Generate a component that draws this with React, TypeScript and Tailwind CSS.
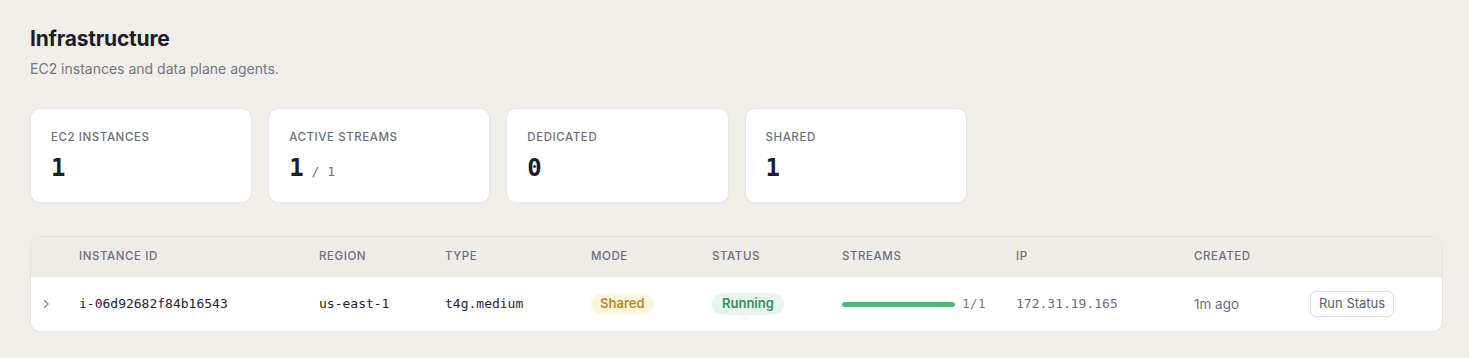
import React from "react";

const sans = { fontFamily: '"Inter", "Noto Sans", sans-serif' };
const mono = { fontFamily: '"DejaVu Sans Mono", "Liberation Mono", monospace' };

function Card({ label, value, sub }: { label: string; value: string; sub?: string }) {
  return (
    <div className="bg-white rounded-[10px] border border-[#e9e6e1] h-[95px] px-5 pt-[20px] shadow-[0_1px_2px_rgba(0,0,0,0.03)]">
      <div className="text-[11.5px] tracking-[0.05em] text-[#6b6f7b] font-medium leading-[16px]">{label}</div>
      <div className="mt-[9px] flex items-baseline gap-2" style={mono}>
        <span className="text-[24px] font-bold text-[#1b1d2b] leading-[28px]">{value}</span>
        {sub && <span className="text-[13px] text-[#6b6f7b]">/ {sub}</span>}
      </div>
    </div>
  );
}

export default function App() {
  const cols = "grid grid-cols-[48px_240px_126px_146px_121px_130px_174px_178px_116px_1fr] items-center";
  return (
    <div className="w-[1469px] h-[358px] bg-[#f1eee9] pl-[30px] pr-[26px] pt-[25px]" style={sans}>
      <h1 className="text-[21px] font-bold text-[#1b1d2b] leading-[28px] tracking-[-0.01em]">Infrastructure</h1>
      <p className="text-[14px] text-[#727683] mt-[6px] leading-[20px]">EC2 instances and data plane agents.</p>

      <div className="grid grid-cols-6 gap-4 mt-[29px]">
        <Card label="EC2 INSTANCES" value="1" />
        <Card label="ACTIVE STREAMS" value="1" sub="1" />
        <Card label="DEDICATED" value="0" />
        <Card label="SHARED" value="1" />
      </div>

      <div className="mt-[33px] rounded-[10px] border border-[#e6e3de] overflow-hidden bg-white">
        <div className={`${cols} h-[40px] bg-[#efece7] text-[11.5px] tracking-[0.05em] text-[#6b6f7b] font-medium border-b border-[#e6e3de]`}>
          <div />
          <div>INSTANCE ID</div>
          <div>REGION</div>
          <div>TYPE</div>
          <div>MODE</div>
          <div>STATUS</div>
          <div>STREAMS</div>
          <div>IP</div>
          <div>CREATED</div>
          <div />
        </div>
        <div className={`${cols} h-[54px] text-[13px] text-[#1f2330]`}>
          <div className="flex pl-[10px]">
            <svg width="10" height="10" viewBox="0 0 10 10" fill="none" stroke="#8a8d97" strokeWidth="1.3" strokeLinecap="round" strokeLinejoin="round">
              <path d="M3.5 1.5 L7 5 L3.5 8.5" />
            </svg>
          </div>
          <div style={mono}>i-06d92682f84b16543</div>
          <div style={mono}>us-east-1</div>
          <div style={mono}>t4g.medium</div>
          <div>
            <span className="inline-flex items-center h-[22px] px-[9px] rounded-full bg-[#fcf6e1] text-[#b98a2c] text-[13px] font-semibold">Shared</span>
          </div>
          <div>
            <span className="inline-flex items-center h-[22px] px-[10px] rounded-full bg-[#e6f6ef] text-[#3b8a5c] text-[13px] font-semibold">Running</span>
          </div>
          <div className="flex items-center gap-[7px]">
            <div className="w-[113px] h-[5px] rounded-full bg-[#4cb87a]" />
            <span className="text-[#7a7e8a]" style={mono}>1/1</span>
          </div>
          <div className="text-[#6b6f7b]" style={mono}>172.31.19.165</div>
          <div className="text-[#6b6f7b] text-[13.5px]">1m ago</div>
          <div>
            <button className="h-[26px] px-[8px] rounded-[6px] border border-[#dedbd6] bg-white text-[13px] text-[#5a5e6a]">Run Status</button>
          </div>
        </div>
      </div>
    </div>
  );
}
